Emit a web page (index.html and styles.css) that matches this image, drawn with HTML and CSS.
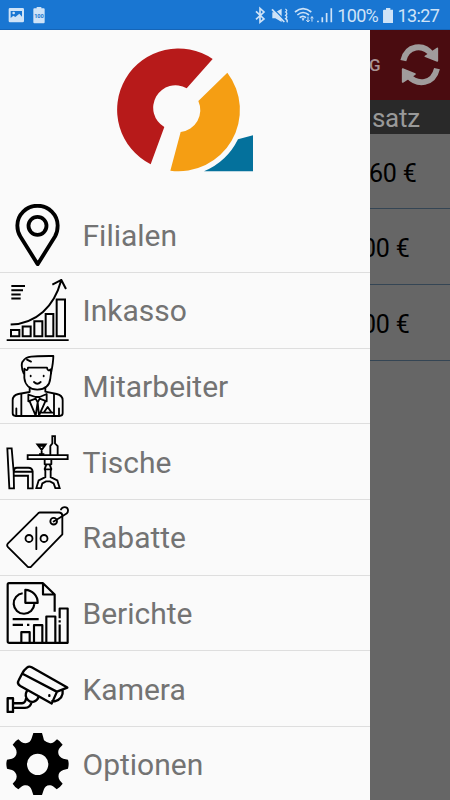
FILE: index.html
```
<!DOCTYPE html>
<html lang="de">
<head>
<meta charset="utf-8">
<title>Menü</title>
<link rel="stylesheet" href="styles.css">
</head>
<body>
<div class="screen">
  <header class="status">
    <svg class="status-left" viewBox="0 0 150 90">
      <path fill="#cfe3f7" fill-rule="evenodd" d="M30 24H68Q72 24 72 28V63Q72 67 68 67H30Q26 67 26 63V28Q26 24 30 24ZM32 33V54L40 47L46 51L58 41L66 50V33ZM41 35A4 4 0 1 1 41 43A4 4 0 1 1 41 35Z"/>
      <path fill="#cfe3f7" d="M110 21H124V25H131Q134 25 134 28V67Q134 70 131 70H103Q100 70 100 67V28Q100 25 103 25H110Z"/>
      <text x="117" y="54" class="tiny">100</text>
    </svg>
    <div class="status-right">
      <svg class="status-icons" viewBox="40 0 250 90">
        <path fill="#cfe3f7" d="M98 37H107L126 26V66L107 55H98ZM186 55H195L190 64Z"/>
        <path d="M99 24L136 62" stroke="#1976d2" stroke-width="4"/>
        <g fill="none" stroke="#cfe3f7" stroke-width="5">
          <path d="M49 34L73 57L61 67V25L73 36L49 58"/>
          <path d="M97 28L134 66"/>
          <path d="M137 27Q145 31 138 36Q145 41 138 46Q145 51 138 56Q145 61 142 67" stroke-width="4"/>
          <path d="M166 36Q190 16 215 36M173 45Q190 30 208 45M180 53Q190 45 199 53"/>
          <path d="M205 50V65M200 60L205 66L210 60M217 65V50M213 55L217 50L221 55" stroke-width="3"/>
          <path d="M235 62V67M248 52V67M261 39V67M275 25V67"/>
        </g>
      </svg>
      <span class="percent">100%</span>
      <svg class="battery" viewBox="0 0 32 46"><path fill="#cfe3f7" d="M9 0H22V5H29Q32 5 32 8V43Q32 46 29 46H3Q0 46 0 43V8Q0 5 3 5H9Z"/></svg>
      <span class="clock">13:27</span>
    </div>
  </header>
  <div class="body">
    <nav class="drawer">
      <div class="brand">
        <svg class="logo" viewBox="0 0 510 450">
          <path fill="#b71a1a" d="M338 72A183.700 183.700 0 1 0 152 388L193 276A63 63 0 0 1 260 160Z"/>
          <path fill="#f59e13" d="M382 113A184 184 0 0 1 211 407L242 291A66 66 0 0 0 295 198Z"/>
          <path fill="#04719c" d="M459 301V409H312Q381 380 414 313Z"/>
        </svg>
      </div>
      <a class="item">
        <svg class="icon" viewBox="18 26.4 189 186">
          <g fill="none" stroke="#000" stroke-width="11.500" stroke-linejoin="round"><path d="M113 207L61 124C52 110 52 99 52 91A60 59 0 0 1 173 91C173 99 173 110 165 124Z"/><circle cx="112.500" cy="92" r="27"/></g>
        </svg><span>Filialen</span></a>
      <a class="item">
        <svg class="icon" viewBox="18 22.2 189 186">
          <g fill="none" stroke="#000" stroke-width="6"><path d="M34 43H75M34 56H69M34 69H62M34 81H62M20 206H206M32 159C110 155 162 105 183 28M157 39L184 25L198 52"/><path d="M33 175H58V194H33ZM68 165H92V194H68ZM103 149H127V194H103ZM137 127H160V194H137ZM170 84H195V194H170Z"/></g>
        </svg><span>Inkasso</span></a>
      <a class="item">
        <svg class="icon" viewBox="18 21 189 186">
          <g fill="none" stroke="#000" stroke-width="5.500" stroke-linejoin="round" stroke-linecap="round">
            <path d="M71 76C64 61 63 43 70 38C79 23 101 24 160 24C160 40 157 57 153 76"/>
            <path d="M81 35L93 41M73 76V62Q83 72 84 59Q112 59 141 59Q143 72 153 64V76Q152 82 151 91C149 111 136 124 112 125C89 124 75 110 73 90Z"/>
            <path d="M92 83V85M131 83V85M102 102Q112 112 122 102"/>
            <path d="M89 118V132L55 138Q38 142 38 157V196Q38 204 47 204H178Q188 204 188 196V157Q188 142 170 138L136 131V118"/>
            <path d="M64 138V204M162 138V204M85 140V160L107 152L113 163L119 152L140 160V138L119 147H107ZM89 160L107 203L113 163L117 203L136 160M49 181V204M177 181V204M126 194H160M132 193L143 177L154 193"/>
          </g>
        </svg><span>Mitarbeiter</span></a>
      <a class="item">
        <svg class="icon" viewBox="18 19.8 189 186">
          <g fill="none" stroke="#000" stroke-width="5.500">
            <path d="M22 72H35L41 142L42 192H28ZM42 142H98V192H84V154H42M42 139Q42 130 51 130H85Q97 130 98 142M40 133L49 130"/>
            <path d="M83 92H203V104H83ZM151 91V65L157 57V35H165V57L173 65V91M112 60H137L125 77ZM125 76V91M117 89H133M114 64H136"/>
            <path d="M134 105V119L138 123L134 134L136 140V158L116 168L109 191H123L127 177L138 171H150L161 177L166 191H179L172 168L152 158V140L154 134L150 123L154 119V105M134 120H154M134 135H154"/>
          </g>
        </svg><span>Tische</span></a>
      <a class="item">
        <svg class="icon" viewBox="18 18.6 189 186">
          <g fill="none" stroke="#000" stroke-width="5.500" stroke-linecap="round" stroke-linejoin="round">
            <path d="M119 38H178Q187 39 187 48V104L94 200Q88 205 82 200L24 142Q19 136 24 131L113 42Q116 38 119 38Z"/>
            <path d="M109 83V148M161 65L200 41C206 36 206 22 194 22Q186 22 183 29"/><circle cx="161" cy="64" r="10"/><circle cx="87" cy="116" r="10.500"/><circle cx="132" cy="116" r="10.500"/>
          </g>
        </svg><span>Rabatte</span></a>
      <a class="item">
        <svg class="icon" viewBox="18 17.4 189 186">
          <g fill="none" stroke="#000" stroke-width="6.500" stroke-linejoin="round">
            <path d="M164 107V55L129 21H27Q23 21 23 26V195Q23 200 28 200H203V97H179V126M129 21V55H163M179 132V139M179 145V201"/>
            <path d="M64 201V168H89V201M102 201V147H127V201M139 201V121H166V201M38 129H116M38 146H69M81 146H88"/>
            <path d="M68 51A31 31 0 1 0 103 84M76 41V80H113A38 38 0 0 0 76 41Z"/>
          </g>
        </svg><span>Berichte</span></a>
      <a class="item">
        <svg class="icon" viewBox="18 16.2 189 186">
          <g fill="none" stroke="#000" stroke-width="7" stroke-linejoin="round" stroke-linecap="round">
            <path d="M81 45Q87 40 95 44L202 105L171 117L155 153L61 100Q50 93 56 83L67 62Q70 54 81 45ZM69 64L170 117M188 112Q191 139 164 146L157 145"/>
            <path d="M81 114C75 125 77 136 85 143C94 151 110 149 116 133M78 138Q76 151 66 152H40M95 148Q91 165 75 166H40M23 137H39V178H23Z"/><path d="M148 128V130"/>
          </g>
        </svg><span>Kamera</span></a>
      <a class="item">
        <svg class="icon" viewBox="18 21 189 186">
          <path fill-rule="evenodd" d="M100 21H126Q129 31 132 43Q148 57 162 48L171 40Q180 45 188 56L179 66C169 80 178 94 190 98L204 101Q208 114 204 128L190 132C177 136 171 149 179 163L188 173Q180 184 170 190L161 182C148 173 135 178 131 192L126 207H100L95 192C91 179 78 173 64 182L55 190Q44 183 38 173L47 163C54 150 48 137 36 132L21 128Q17 114 21 101L36 98C49 93 54 80 46 66L38 56Q45 45 55 40L64 48C78 56 91 51 95 37ZM113 83A32 32 0 1 0 113 147A32 32 0 1 0 113 83Z"/>
        </svg><span>Optionen</span></a>
    </nav>
    <main class="page">
      <div class="toolbar"><span class="action">G</span>
        <svg class="refresh" viewBox="150 55 120 130"><g fill="none" stroke="#a09c9c" stroke-width="18"><path d="M160 108C170 62 220 54 247 91M261 132C250 178 203 186 173 151"/></g><path fill="#a09c9c" d="M262 71V109L226 95ZM158 172V133L195 148Z" stroke="#a09c9c" stroke-width="5" stroke-linejoin="round"/></svg>
      </div>
      <div class="heading">satz</div>
      <div class="sum">60 €</div>
      <div class="sum zero">00 €</div>
      <div class="sum zero">00 €</div>
    </main>
  </div>
</div>
</body>
</html>
```
FILE: styles.css
```
* { box-sizing: border-box; }
body { margin: 0; font-family: Roboto, "Liberation Sans", sans-serif; }
.screen { width: 450px; height: 800px; overflow: hidden; display: flex; flex-direction: column; background: #666; }
.status { height: 30px; flex: none; display: flex; justify-content: space-between; background: #1976d2; border-bottom: 1px solid #1565b8; color: #cfe3f7; }
.status-left { width: 50px; height: 30px; }
.tiny { font-size: 17px; font-weight: 700; text-anchor: middle; fill: #1976d2; }
.status-right { display: flex; align-items: flex-start; width: 197px; font-size: 18px; line-height: 31px; white-space: nowrap; }
.status-icons { width: 83.3px; height: 30px; flex: none; }
.percent { width: 41px; margin-left: 1px; flex: none; letter-spacing: -0.7px; }
.battery { width: 10.7px; height: 15.3px; margin: 7.5px 4px 0 4.5px; flex: none; }
.clock { letter-spacing: -0.6px; }
.body { flex: 1; min-height: 0; display: flex; }
.drawer { width: 370px; flex: none; background: #fafafa; overflow: hidden; }
.brand { height: 167.5px; padding: 5px 0 0 100px; }
.logo { display: block; width: 170px; height: 150px; }
.item { height: 75.65px; display: flex; align-items: center; gap: 13.5px; padding-left: 6px; border-bottom: 1px solid #dedede; color: #737373; font-size: 30px; }
.item span { padding-top: 1px; }
.icon { width: 63px; height: 62px; flex: none; }
.page { flex: 1; min-width: 0; overflow: hidden; color: #000; }
.toolbar { height: 70px; background: #4a0c10; display: flex; align-items: center; justify-content: space-between; padding-right: 10px; }
.action { color: #aa9495; font-size: 17px; font-weight: 500; margin-left: -1px; }
.refresh { width: 40px; height: 43.3px; margin-top: 0; }
.heading { height: 33.5px; background: #292929; color: #999; font-size: 26px; line-height: 36px; padding-left: 2px; letter-spacing: -0.3px; }
.sum { height: 75.7px; border-bottom: 1px solid #344554; font-size: 25px; line-height: 80px; white-space: nowrap; margin-left: -1px; letter-spacing: -0.2px; }
.zero { text-indent: -7px; }
```
